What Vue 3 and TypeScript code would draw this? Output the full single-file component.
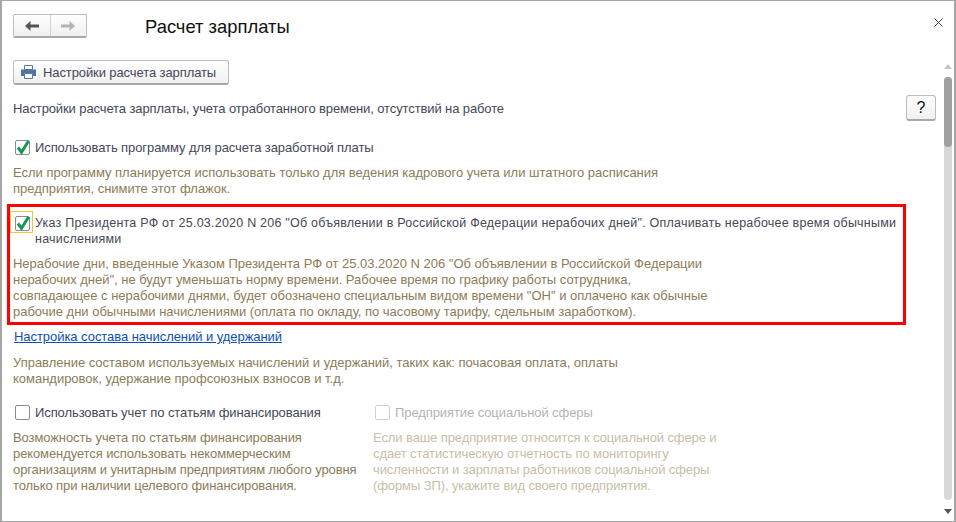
<script setup lang="ts">
const financeHint = [
  'Возможность учета по статьям финансирования',
  'рекомендуется использовать некоммерческим',
  'организациям и унитарным предприятиям любого уровня',
  'только при наличии целевого финансирования.'
];
const socialHint = [
  'Если ваше предприятие относится к социальной сфере и',
  'сдает статистическую отчетность по мониторингу',
  'численности и зарплаты работников социальной сферы',
  '(формы ЗП), укажите вид своего предприятия.'
];
const decreeHint = [
  'Нерабочие дни, введенные Указом Президента РФ от 25.03.2020 N 206 "Об объявлении в Российской Федерации',
  'нерабочих дней", не будут уменьшать норму времени. Рабочее время по графику работы сотрудника,',
  'совпадающее с нерабочими днями, будет обозначено специальным видом времени "ОН" и оплачено как обычные',
  'рабочие дни обычными начислениями (оплата по окладу, по часовому тарифу, сдельным заработком).'
];
</script>

<template>
  <div class="window">
    <header class="head">
      <div class="nav">
        <span class="nav-btn">
          <svg width="16" height="12" viewBox="0 0 16 12"><path d="M1 6l5.5-5v3.400H15v3.200H6.500V11z" fill="#555" /></svg>
        </span>
        <span class="nav-btn">
          <svg width="16" height="12" viewBox="0 0 16 12"><path d="M15 6L9.500 1v3.400H1v3.200h8.500V11z" fill="#b4b4b4" /></svg>
        </span>
      </div>
      <h1 class="title">Расчет зарплаты</h1>
      <svg class="close" width="9" height="9" viewBox="0 0 9 9"><path d="M.5.5l8 8M8.500.5l-8 8" stroke="#444" fill="none" /></svg>
    </header>

    <div class="main">
      <div class="content">
        <button class="btn print-btn">
          <svg width="15" height="14" viewBox="0 0 15 14">
            <path d="M3.500.5h8v4h-8z" fill="#fff" stroke="#5a7a9c" />
            <path d="M0 4.500h15V11h-3V8H3v3H0z" fill="#4f769e" />
            <path d="M3.500 8.500h8v5h-8z" fill="#fff" stroke="#5a7a9c" />
          </svg>
          <span>Настройки расчета зарплаты</span>
        </button>

        <div class="desc-row">
          <span>Настройки расчета зарплаты, учета отработанного времени, отсутствий на работе</span>
          <button class="btn help">?</button>
        </div>

        <label class="check first">
          <span class="box">
            <svg width="15" height="15" viewBox="0 0 15 15"><path d="M3 7.500l3.500 4.800L13.500 1" stroke="#129a55" stroke-width="3" fill="none" /></svg>
          </span>
          Использовать программу для расчета заработной платы
        </label>
        <p class="hint hint-first">
          Если программу планируется использовать только для ведения кадрового учета или штатного расписания<br />предприятия, снимите этот флажок.
        </p>

        <section class="decree">
          <div class="decree-check">
            <span class="focus">
              <span class="box">
                <svg width="15" height="15" viewBox="0 0 15 15"><path d="M3 7.500l3.500 4.800L13.500 1" stroke="#129a55" stroke-width="3" fill="none" /></svg>
              </span>
            </span>
            <span class="decree-label">Указ Президента РФ от 25.03.2020 N 206 "Об объявлении в Российской Федерации нерабочих дней". Оплачивать нерабочее время обычными начислениями</span>
          </div>
          <p class="hint decree-hint">
            <template v-for="line in decreeHint" :key="line">{{ line }}<br /></template>
          </p>
        </section>

        <a class="link">Настройка состава начислений и удержаний</a>
        <p class="hint link-hint">
          Управление составом используемых начислений и удержаний, таких как: почасовая оплата, оплаты<br />командировок, удержание профсоюзных взносов и т.д.
        </p>

        <div class="columns">
          <div class="col">
            <label class="check"><span class="box"></span>Использовать учет по статьям финансирования</label>
            <p class="hint col-hint">
              <template v-for="line in financeHint" :key="line">{{ line }}<br /></template>
            </p>
          </div>
          <div class="col disabled">
            <label class="check"><span class="box"></span>Предприятие социальной сферы</label>
            <p class="hint col-hint">
              <template v-for="line in socialHint" :key="line">{{ line }}<br /></template>
            </p>
          </div>
        </div>
      </div>

      <div class="scroll">
        <span class="arrow up"></span>
        <div class="track"><div class="thumb"></div></div>
        <span class="arrow down"></span>
      </div>
    </div>
  </div>
</template>

<style>
html, body {
  margin: 0;
  background: #fff;
}
</style>

<style scoped>
.window {
  box-sizing: border-box;
  width: 956px;
  height: 522px;
  border: 1px solid #a6a6a6;
  border-left-width: 2px;
  border-right-width: 2px;
  background: #fff;
  font-family: "Liberation Sans", Arial, sans-serif;
  font-size: 13px;
  color: #444858;
  overflow: hidden;
  display: flex;
  flex-direction: column;
}

.head {
  display: flex;
  align-items: center;
  height: 45px;
  padding: 5px 0 0 11px;
  box-sizing: border-box;
  flex: none;
}

.nav {
  display: flex;
  width: 74px;
  height: 24px;
  box-sizing: border-box;
  border: 1px solid #bdbdbd;
  border-bottom: 2px solid #a8a8a8;
  border-radius: 2px;
  background: linear-gradient(#fff, #f0f0f0);
}

.nav-btn {
  flex: 1;
  display: flex;
  align-items: center;
  justify-content: center;
}

.nav-btn + .nav-btn {
  border-left: 1px solid #d0d0d0;
}

.title {
  margin: 1px 0 0 58px;
  font-size: 18.400px;
  font-weight: 400;
  color: #111;
  white-space: nowrap;
}

.close {
  margin: -8px 11px 0 auto;
}

.main {
  flex: 1;
  display: flex;
  min-height: 0;
}

.content {
  flex: 1;
  min-width: 0;
  padding: 14px 8px 0 11px;
}

.btn {
  box-sizing: border-box;
  border: 1px solid #bdbdbd;
  border-bottom: 2px solid #a8a8a8;
  border-radius: 3px;
  background: linear-gradient(#fff, #f0f0f0);
  font: inherit;
  color: inherit;
  padding: 0;
}

.print-btn {
  display: flex;
  align-items: center;
  gap: 7px;
  width: 216px;
  height: 25px;
  padding-left: 7px;
  letter-spacing: -0.100px;
}

.desc-row {
  display: flex;
  align-items: center;
  justify-content: space-between;
  height: 26px;
  margin-top: 10px;
  letter-spacing: -0.110px;
}

.help {
  width: 30px;
  height: 26px;
  font-size: 16px;
  color: #111;
}

.check {
  display: flex;
  align-items: center;
  gap: 5px;
  height: 18px;
  white-space: nowrap;
  letter-spacing: -0.090px;
}

.first {
  margin: 17px 0 0 2px;
}

.box {
  box-sizing: border-box;
  display: flex;
  align-items: center;
  justify-content: center;
  flex: none;
  width: 15px;
  height: 15px;
  border: 1px solid #8c8c8c;
  border-radius: 2px;
  background: #fff;
}

.box svg {
  flex: none;
}

.hint {
  margin: 0;
  color: #8c7c58;
  line-height: 16px;
  white-space: nowrap;
  letter-spacing: -0.015px;
}

.hint-first {
  margin-top: 9px;
}

.decree {
  box-sizing: border-box;
  width: 899px;
  height: 121px;
  margin: 7px 0 0 -6px;
  border: 3px solid #ff0000;
  padding: 4px 0 0;
}

.decree-check {
  display: flex;
  align-items: flex-start;
}

.focus {
  box-sizing: border-box;
  flex: none;
  display: flex;
  align-items: center;
  justify-content: center;
  width: 23px;
  height: 22px;
  border: 1px solid #f5c242;
}

.focus .box {
  margin: 2px 0 0 1px;
}

.decree-label {
  margin: 4px 0 0 2px;
  line-height: 16px;
  font-size: 12.500px;
  letter-spacing: 0.225px;
}

.decree-hint {
  margin: 9px 0 0 3px;
}

.link {
  display: block;
  margin: 4px 0 0 1px;
  height: 16px;
  line-height: 16px;
  color: #0a50b4;
  text-decoration: underline;
  letter-spacing: -0.050px;
}

.link-hint {
  margin-top: 10px;
}

.columns {
  display: flex;
  margin-top: 16px;
}

.col {
  width: 360px;
}

.col .check {
  margin-left: 2px;
}

.col-hint {
  margin-top: 9px;
  letter-spacing: -0.100px;
}

.disabled {
  color: #b4b4b4;
}

.disabled .box {
  border-color: #d0d0d0;
}

.disabled .hint {
  color: #c8bea6;
}

.scroll {
  flex: none;
  width: 8px;
  margin-right: 2px;
  display: flex;
  flex-direction: column;
  align-items: center;
  padding-top: 18px;
  padding-bottom: 7px;
}

.arrow {
  flex: none;
  width: 0;
  height: 0;
  border-left: 4px solid transparent;
  border-right: 4px solid transparent;
}

.up {
  border-bottom: 5px solid #c4c4c4;
  margin-bottom: 8px;
}

.down {
  border-top: 5px solid #555;
  margin-top: 9px;
}

.track {
  flex: 1;
  width: 8px;
  border-radius: 4px;
  background: #d8d8d8;
}

.thumb {
  height: 70px;
  border-radius: 4px;
  background: #a0a0a0;
}
</style>
